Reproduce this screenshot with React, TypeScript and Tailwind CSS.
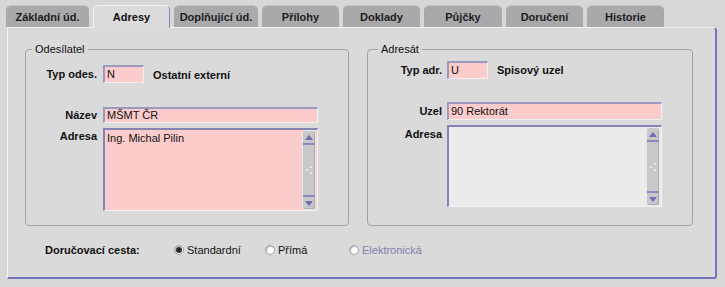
import React from 'react';

const tabs: [string, string][] = [
  ['Základní úd.', 'w-[83px]'],
  ['Adresy', 'w-[77px]'],
  ['Doplňující úd.', 'w-[84px]'],
  ['Přílohy', 'w-[77px]'],
  ['Doklady', 'w-[77px]'],
  ['Půjčky', 'w-[78px]'],
  ['Doručení', 'w-[77px]'],
  ['Historie', 'w-[77px]'],
];

function Arrow({ up }: { up?: boolean }) {
  return (
    <svg width="8" height="5" viewBox="0 0 8 5">
      <polygon points={up ? '0,5 8,5 4,0' : '0,0 8,0 4,5'} fill="#6d6db0" />
    </svg>
  );
}

function ScrollBar() {
  return (
    <div className="w-[14px] h-full flex flex-col bg-[#c8c8cb] border border-[#e8e8ea] rounded-[3px] shadow-[inset_-1px_-1px_0_#a9a9ae]">
      <div className="h-[14px] flex items-center justify-center border-b-2 border-[#8a8abb]">
        <Arrow up />
      </div>
      <div className="flex-1 flex items-center justify-center">
        <svg width="8" height="10" viewBox="0 0 8 10">
          <circle cx="6" cy="2" r="1.1" fill="#f2f2f2" />
          <circle cx="2" cy="5" r="1.1" fill="#f2f2f2" />
          <circle cx="6" cy="8" r="1.1" fill="#f2f2f2" />
        </svg>
      </div>
      <div className="h-[14px] flex items-center justify-center border-t-2 border-[#8a8abb]">
        <Arrow />
      </div>
    </div>
  );
}

function Field({ value, className }: { value?: string; className: string }) {
  return (
    <div className={`flex items-center pl-[2px] bg-[#fccbcb] border-t-2 border-l-2 border-t-[#9a9ac0] border-l-[#9a9ac0] border-b border-r border-b-[#efefef] border-r-[#efefef] leading-[13px] ${className}`}>
      {value}
    </div>
  );
}

function TextBox({ value, className }: { value?: string; className: string }) {
  return (
    <div className={`flex border-t-2 border-l-2 border-t-[#8585b5] border-l-[#8585b5] border-b border-r border-b-[#f2f2f2] border-r-[#f2f2f2] pr-px ${className}`}>
      <div className="flex-1 pl-[2px] pt-[2px] leading-[13px]">{value}</div>
      <ScrollBar />
    </div>
  );
}

function Radio({ checked, label, disabled, className }: { checked?: boolean; label: string; disabled?: boolean; className: string }) {
  return (
    <div className={`flex items-center gap-[3px] ${className}`}>
      <div className="w-[10px] h-[10px] rounded-full bg-white border border-[#9d9da3] flex items-center justify-center shadow-[inset_1px_1px_1px_#b9b9b9]">
        {checked && <div className="w-[6px] h-[6px] rounded-full bg-[#2b2b2b]" />}
      </div>
      <span className={disabled ? 'text-[#7f7fb0]' : 'text-[#111]'}>{label}</span>
    </div>
  );
}

export default function App() {
  return (
    <div className="w-[725px] h-[287px] bg-[#d7d7d7] pt-[5px] font-['Liberation_Sans',Arial,sans-serif] text-[11px] text-[#111] overflow-hidden">
      <div className="flex gap-[4px] pl-[6px] h-[22px]">
        {tabs.map(([t, w]) =>
          t === 'Adresy' ? (
            <div key={t} className={`relative z-10 ${w} h-[23px] flex items-center justify-center pt-px font-bold bg-[#dbdbdb] rounded-t-[5px] border-l border-t border-[#f4f4f4] border-r border-r-[#8686c0]`}>
              {t}
            </div>
          ) : (
            <div key={t} className={`${w} h-[22px] flex items-center justify-center pt-px font-bold text-[#1c1c1c] bg-[#a9a9ac] rounded-t-[5px] border-t border-[#c4c4c6]`}>
              {t}
            </div>
          )
        )}
      </div>

      <div className="ml-[7px] w-[710px] h-[252px] bg-[#dadada] border-l border-t border-[#f2f2f2] border-r-2 border-b-2 border-r-[#7474b8] border-b-[#7474b8] rounded-tr-[4px] rounded-br-[3px] flex flex-col">
        <div className="flex gap-[18px] pl-[17px] pt-[15px]">
          <fieldset className="w-[324px] border border-[#a3a3a6] rounded-[4px] px-0 pb-[14px]">
            <legend className="ml-[6px] px-[3px] leading-[13px] text-[#111]">Odesílatel</legend>
            <div className="flex items-center mt-[9px] h-[18px]">
              <div className="w-[71px] text-right font-bold">Typ odes.</div>
              <Field value="N" className="ml-[6px] w-[41px] h-[18px]" />
              <div className="ml-[9px] mt-[3px] font-bold">Ostatní externí</div>
            </div>
            <div className="flex items-center mt-[24px] h-[16px]">
              <div className="w-[71px] text-right font-bold">Název</div>
              <Field value="MŠMT ČR" className="ml-[6px] w-[215px] h-[16px]" />
            </div>
            <div className="flex mt-[5px]">
              <div className="w-[71px] text-right font-bold mt-[2px] leading-[13px]">Adresa</div>
              <TextBox value="Ing. Michal Pilin" className="ml-[6px] w-[215px] h-[83px] bg-[#fccbcb]" />
            </div>
          </fieldset>

          <fieldset className="w-[326px] border border-[#a3a3a6] rounded-[4px] px-0 pb-[18px]">
            <legend className="ml-[10px] px-[3px] leading-[13px] text-[#111]">Adresát</legend>
            <div className="flex items-center mt-[5px] h-[18px]">
              <div className="w-[74px] text-right font-bold">Typ adr.</div>
              <Field value="U" className="ml-[5px] w-[41px] h-[18px]" />
              <div className="ml-[9px] mt-[1px] font-bold">Spisový uzel</div>
            </div>
            <div className="flex items-center mt-[23px] h-[18px]">
              <div className="w-[74px] text-right font-bold">Uzel</div>
              <Field value="90 Rektorát" className="ml-[5px] w-[215px] h-[18px]" />
            </div>
            <div className="flex mt-[5px]">
              <div className="w-[74px] text-right font-bold mt-[3px] leading-[13px]">Adresa</div>
              <TextBox className="ml-[5px] w-[215px] h-[82px] bg-[#ebebec]" />
            </div>
          </fieldset>
        </div>

        <div className="flex items-center mt-[17px] pl-[37px] h-[14px]">
          <div className="w-[129px] font-bold">Doručovací cesta:</div>
          <Radio checked label="Standardní" className="w-[91px]" />
          <Radio label="Přímá" className="w-[84px]" />
          <Radio disabled label="Elektronická" className="" />
        </div>
      </div>
    </div>
  );
}
